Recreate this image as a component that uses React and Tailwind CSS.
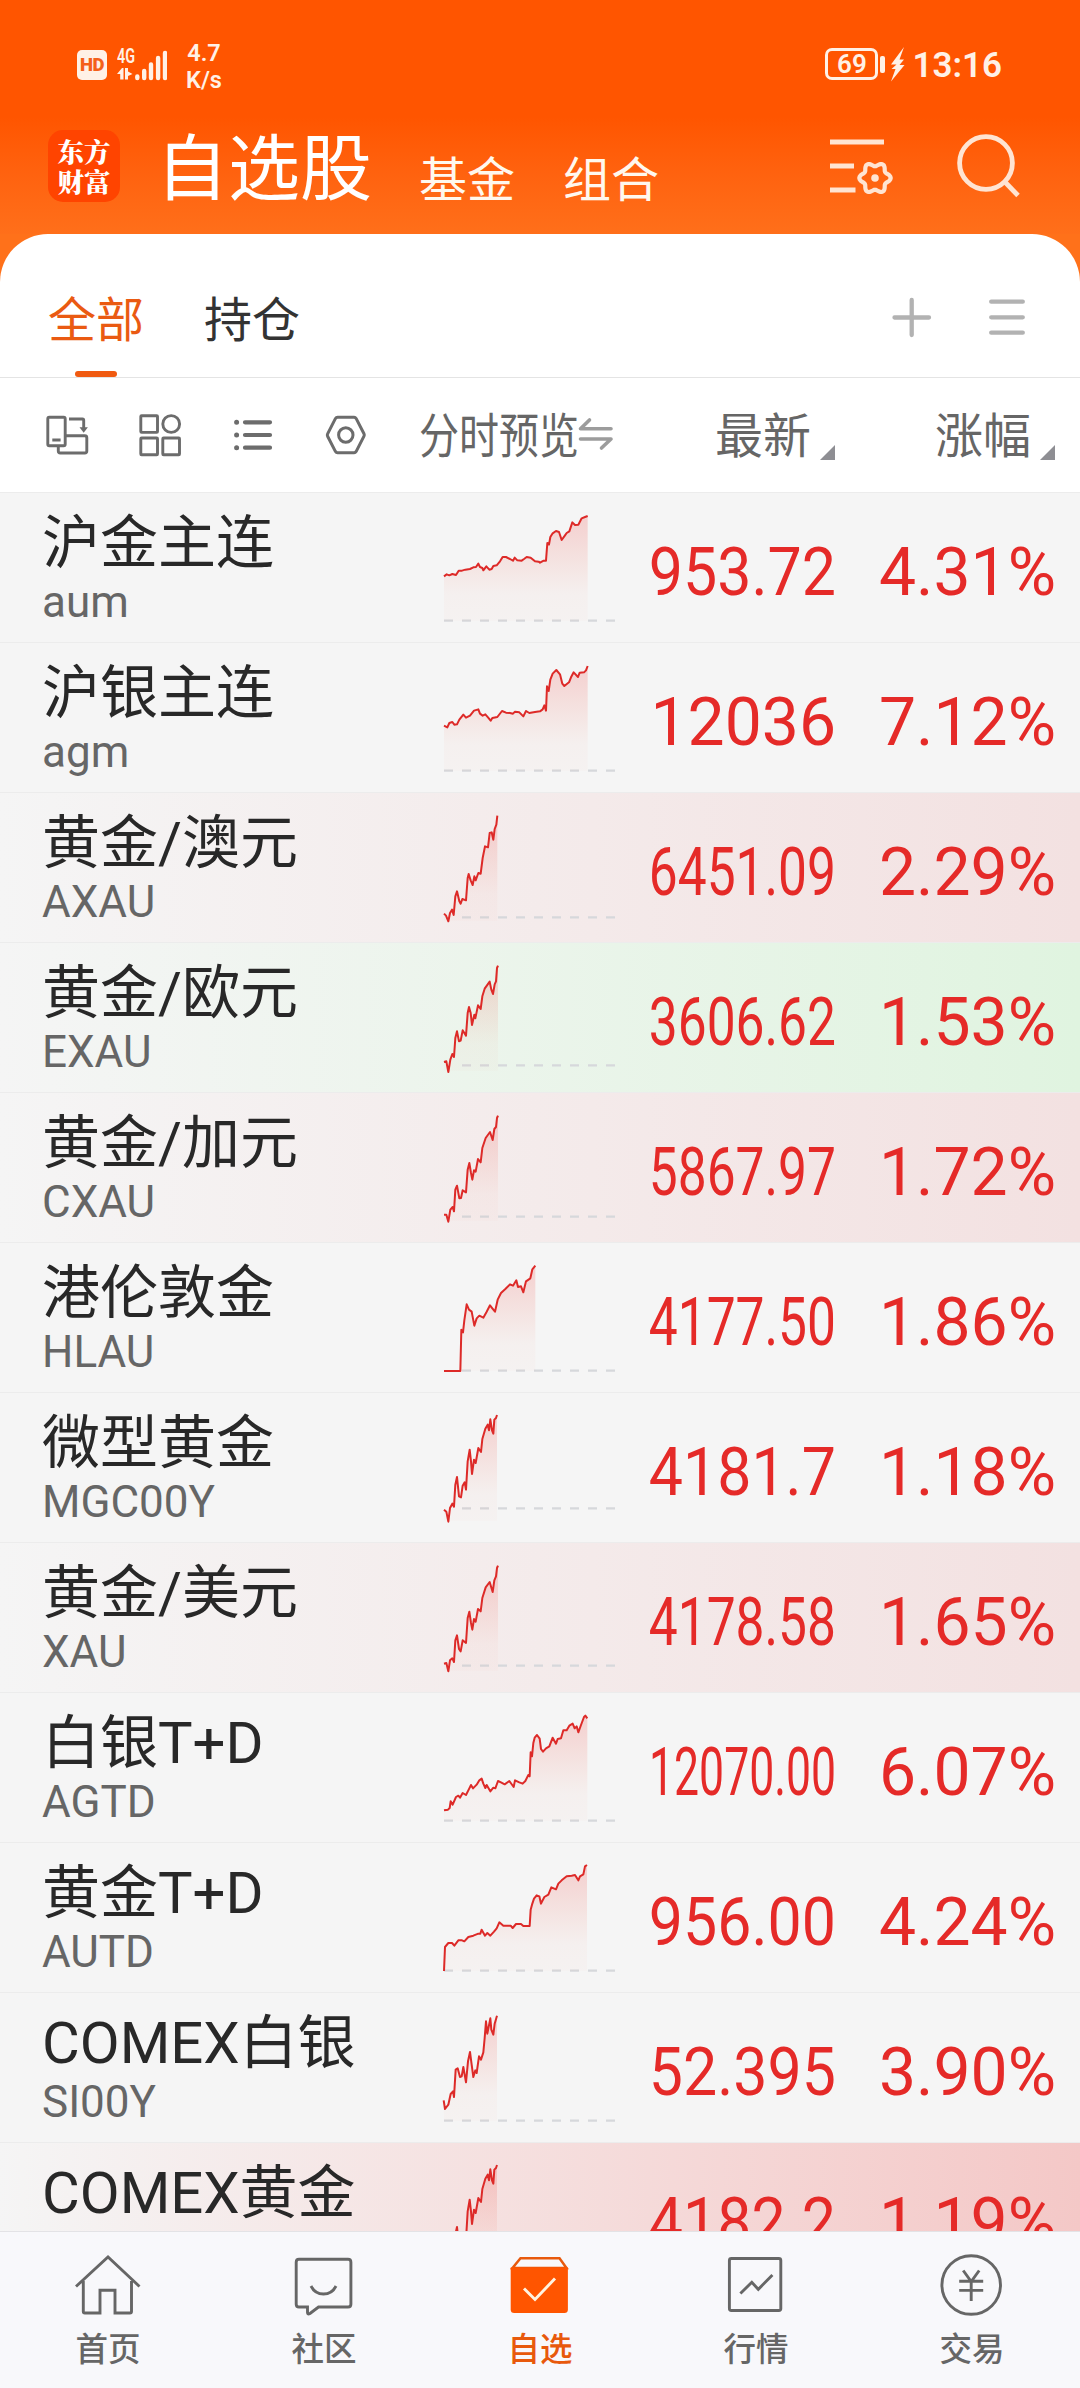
import React from "react";

const FONT = "font-['Roboto','Noto_Sans_CJK_SC',sans-serif]";

const MGC =
  "72,350 79,356 85,386 90,345 97,332 102,341 106,275 111,252 117,310 123,313 128,278 134,268 138,290 143,205 149,170 153,205 156,243 162,200 167,210 175,165 183,177 187,138 196,107 203,95 207,112 211,79 216,112 220,122 223,80 228,75 231,66";

const PLAIN = "bg-[#f5f5f5]";
const RED = "bg-linear-to-r from-[#f5f5f5] to-[#f3e1e1]";
const GREEN = "bg-linear-to-r from-[#f5f5f5] to-[#e0f4e0]";
const DEEP = "bg-linear-to-r from-[#f5f5f5] to-[#f4c8c7]";

// Spark-line points are in thirds of a pixel, measured from the top of the row.
const ROWS = [
  { name: "沪金主连", code: "aum", price: "953.72", pct: "4.31%", squeeze: "scale-x-[0.922]", tone: PLAIN, base: 383, dash: 72,
    pts: "72,250 80,244 88,247 97,243 108,246 116,233 126,233 136,230 150,228 160,223 168,222 175,212 180,222 187,225 190,232 199,220 208,230 215,228 220,219 230,217 240,205 248,192 258,192 270,198 279,203 284,194 292,202 305,203 312,198 320,192 332,194 345,205 356,206 360,209 371,203 378,203 382,150 387,155 391,132 398,121 408,114 417,117 425,141 435,127 440,120 448,115 457,88 465,96 475,95 485,76 495,72 503,69" },
  { name: "沪银主连", code: "agm", price: "12036", pct: "7.12%", squeeze: "", tone: PLAIN, base: 383, dash: 72,
    pts: "72,248 82,253 88,240 97,237 103,245 111,244 118,230 130,215 138,224 150,218 162,203 175,199 180,212 188,218 196,214 204,223 212,233 217,225 232,222 246,204 258,209 270,210 279,212 285,206 298,208 310,220 318,204 328,210 345,207 360,205 368,199 373,187 378,203 381,130 386,144 391,110 398,92 409,81 420,94 427,122 433,129 447,118 453,103 461,88 474,102 479,89 492,88 498,82 503,69" },
  { name: "黄金/澳元", code: "AXAU", price: "6451.09", pct: "2.29%", squeeze: "scale-x-[0.78]", tone: RED, base: 373, dash: 126,
    pts: "72,362 78,368 85,385 90,360 96,350 101,366 106,310 111,295 118,325 122,332 127,318 138,322 143,255 146,243 152,262 158,276 163,250 167,262 175,240 182,242 188,195 195,160 204,163 209,120 215,118 220,140 224,108 229,95 232,68" },
  { name: "黄金/欧元", code: "EXAU", price: "3606.62", pct: "1.53%", squeeze: "scale-x-[0.78]", tone: GREEN, base: 367, dash: 126,
    pts: "72,357 79,355 85,387 91,350 97,333 102,342 106,285 111,265 117,295 122,293 128,262 138,278 143,210 147,192 152,210 156,246 163,215 166,226 174,187 182,198 187,160 194,137 201,127 209,116 214,140 219,153 224,124 228,115 231,75 234,68" },
  { name: "黄金/加元", code: "CXAU", price: "5867.97", pct: "1.72%", squeeze: "scale-x-[0.78]", tone: RED, base: 371, dash: 126,
    pts: "72,365 79,365 85,386 91,350 98,342 102,355 106,290 111,278 118,316 123,315 128,292 138,298 143,230 148,210 153,240 157,260 162,232 167,236 174,198 182,208 187,165 197,135 210,117 218,141 223,108 228,102 231,75 234,68" },
  { name: "港伦敦金", code: "HLAU", price: "4177.50", pct: "1.86%", squeeze: "scale-x-[0.78]", tone: PLAIN, base: 383, dash: 126,
    pts: "72,384 121,384 124,260 129,268 133,232 140,184 147,200 155,206 163,248 170,226 178,218 190,224 200,206 210,187 217,196 225,206 233,170 243,150 256,138 270,124 279,128 289,112 294,132 303,130 310,148 318,115 331,106 337,79 346,68" },
  { name: "微型黄金", code: "MGC00Y", price: "4181.7", pct: "1.18%", squeeze: "scale-x-[0.922]", tone: PLAIN, base: 346, dash: 126, pts: MGC },
  { name: "黄金/美元", code: "XAU", price: "4178.58", pct: "1.65%", squeeze: "scale-x-[0.78]", tone: RED, base: 368, dash: 126,
    pts: "72,362 79,360 85,385 90,352 97,346 102,357 106,292 111,277 117,318 122,325 128,292 138,300 143,225 148,206 153,240 157,260 162,228 167,236 174,198 182,205 187,165 197,133 209,117 218,147 223,112 228,100 231,75 234,68" },
  { name: "白银T+D", code: "AGTD", price: "12070.00", pct: "6.07%", squeeze: "scale-x-[0.675]", tone: PLAIN, base: 383, dash: 72,
    pts: "72,352 84,350 89,345 92,325 98,335 108,312 115,308 120,314 128,300 138,306 148,286 153,276 159,286 170,275 178,262 185,257 190,272 196,285 200,276 211,295 220,284 226,286 234,264 243,268 254,274 268,264 281,282 285,262 298,268 308,272 316,264 325,246 329,250 332,178 336,190 340,150 344,134 351,126 359,137 363,168 369,176 378,166 388,160 398,134 408,152 413,138 423,136 430,112 440,112 448,98 458,92 464,106 470,100 475,118 483,96 492,72 496,68 502,76" },
  { name: "黄金T+D", code: "AUTD", price: "956.00", pct: "4.24%", squeeze: "scale-x-[0.922]", tone: PLAIN, base: 383, dash: 72,
    pts: "72,384 75,312 85,300 96,300 103,308 115,292 126,292 133,295 145,282 160,278 175,272 181,272 185,260 195,278 202,270 211,278 222,266 230,256 238,238 250,248 272,248 278,255 288,243 303,243 310,249 329,249 332,200 336,185 342,167 350,157 358,160 363,182 373,162 385,155 394,133 408,139 415,122 425,112 440,100 455,98 465,96 475,112 480,100 490,94 495,70 501,66" },
  { name: "COMEX白银", code: "SI00Y", price: "52.395", pct: "3.90%", squeeze: "scale-x-[0.922]", tone: PLAIN, base: 383, dash: 72,
    pts: "71,322 75,348 85,335 92,303 99,295 102,312 107,230 113,226 120,252 125,250 130,222 138,268 144,205 150,177 155,215 160,252 166,232 170,240 177,190 183,200 190,178 194,135 198,85 202,122 211,76 214,110 220,125 224,92 231,68" },
  { name: "COMEX黄金", price: "4182.2", pct: "1.19%", squeeze: "scale-x-[0.922]", tone: DEEP, base: 346, dash: 126, pts: MGC },
];

function Spark({ pts, base, dash, id }) {
  const list = pts.split(" ");
  const last = list[list.length - 1].split(",")[0];
  return (
    <svg className="h-[150px] w-[180px]" viewBox="60 0 540 450" fill="none">
      <defs>
        <linearGradient id={id} gradientUnits="userSpaceOnUse" x1="0" x2="0" y1="68" y2="383">
          <stop offset="0" stopColor="#f02828" stopOpacity="0.19" />
          <stop offset="0.75" stopColor="#f04a28" stopOpacity="0.03" />
          <stop offset="1" stopColor="#f04a28" stopOpacity="0.02" />
        </linearGradient>
      </defs>
      <path d={`M${dash} ${base}H585`} stroke="#d6d8db" strokeWidth="6.5" strokeDasharray="27 27" />
      <polygon points={`72,383 ${pts} ${last},383`} fill={`url(#${id})`} />
      <polyline points={pts} stroke="#dd2a28" strokeWidth="6" strokeLinejoin="round" />
    </svg>
  );
}

function Row({ row, index }) {
  return (
    <div className={`flex h-[150px] shrink-0 border-t border-[#ececec] pl-[42px] ${row.tone}`}>
      <div className="w-[398px] pt-[20px]">
        <div className="text-[58px] leading-[60px] whitespace-nowrap text-[#282828]">{row.name}</div>
        {row.code && <div className="mt-[4px] text-[44px] leading-[50px] text-[#666]">{row.code}</div>}
      </div>
      <Spark pts={row.pts} base={row.base} dash={row.dash} id={`fade-${index}`} />
      <div className="flex w-[216px] justify-end pt-[47px] text-[66px] leading-[66px] text-[#e52a28]">
        <span className={`origin-right ${row.squeeze}`}>{row.price}</span>
      </div>
      <div className="flex w-[220px] justify-end pt-[47px] text-[66px] leading-[66px] text-[#e52a28]">{row.pct}</div>
    </div>
  );
}

function StatusBar() {
  return (
    <div className="flex h-[118px] items-start pt-[40px] pr-[78px] pl-[77px] text-[#fff1e6]">
      <div className="mt-[10px] flex h-[30px] w-[30px] items-center justify-center rounded-[5px] bg-[#fff1e6] text-[18.5px] leading-none font-black tracking-[-0.5px] text-[#f4601a]">HD</div>
      <div className="mt-[7px] ml-[10px] flex h-[34px] w-[50px] items-end">
        <div className="flex h-full w-[18px] flex-col">
          <span className="origin-left scale-x-[0.72] text-[20px] leading-[19px] font-semibold">4G</span>
          <svg className="mt-[2px] h-[12px] w-[16px]" viewBox="0 0 16 12" fill="currentColor">
            <path d="M0 6 5 0h1.500v11.500H3.200V6zM8 0h3v3.500L15.500 6 11 8v3.500H8z" />
          </svg>
        </div>
        <svg className="h-[32px] w-[32px]" viewBox="0 0 32 32" stroke="currentColor" strokeWidth="4.400" strokeLinecap="round">
          <path d="M2.300 27.500v1.500M9.200 22v7M16 15.500V29M23.100 9v20M30 4v25" />
        </svg>
      </div>
      <div className="ml-[17px] w-[40px] text-center text-[23.500px] leading-[27px] font-semibold">4.7<br />K/s</div>
      <div className="flex-1" />
      <div className="mt-[8px] flex h-[32px] w-[53px] items-center justify-center rounded-[7px] border-[3px] border-[#fff1e6] text-[26px] leading-none font-semibold">69</div>
      <div className="mt-[16px] ml-[2px] h-[17px] w-[5px] rounded-[2px] bg-[#fff1e6]" />
      <svg className="mt-[7px] ml-[5px] h-[35px] w-[15px]" viewBox="0 0 15 35" fill="currentColor">
        <path d="M14 0 1 17.500h5.500L1.500 22h4L1 34.500 14.500 18H9.500l4.500-5.500H9.500z" />
      </svg>
      <div className="mt-[8px] ml-[7px] text-[35px] leading-[36px] font-semibold">13:16</div>
    </div>
  );
}

// Outline of a six-toothed gear with rounded teeth.
function gearPath(cx, cy) {
  const out = [];
  for (let a = 0; a < 360; a += 5) {
    const t = (a * Math.PI) / 180;
    const r = 13.7 + 2 * Math.cos(6 * t);
    out.push(`${(cx + r * Math.cos(t)).toFixed(2)} ${(cy + r * Math.sin(t)).toFixed(2)}`);
  }
  return `M${out.join("L")}Z`;
}

const GEAR = gearPath(49, 48);

function TitleBar() {
  return (
    <div className="flex h-[116px] items-start pl-[48px] text-white">
      <div className="mt-[12px] flex h-[72px] w-[72px] items-center justify-center rounded-[15px] bg-[#ff4400] text-center font-['Noto_Serif_CJK_SC','Noto_Sans_CJK_SC',sans-serif] text-[26.500px] leading-[30px] font-black">
        东方<br />财富
      </div>
      <div className="mt-[16px] ml-[36px] text-[72px] leading-[72px]">自选股</div>
      <div className="mt-[39px] ml-[47px] text-[48px] leading-[48px] text-[#fff8ee]">基金</div>
      <div className="mt-[39px] ml-[48px] text-[48px] leading-[48px] text-[#fff8ee]">组合</div>
      <svg className="mt-[12px] ml-[167px] h-[72px] w-[72px]" viewBox="0 0 72 72" fill="none" stroke="#ffe4d2" strokeWidth="4.800">
        <path d="M4 12h54M4 36h24M4 60h25.500" />
        <path d={GEAR} strokeWidth="4.200" strokeLinejoin="round" />
        <circle cx="49" cy="48" r="3.800" fill="#ffe4d2" stroke="none" />
      </svg>
      <svg className="mt-[12px] ml-[50px] h-[72px] w-[72px]" viewBox="0 0 72 72" fill="none" stroke="#ffe4d2" strokeWidth="4.800">
        <circle cx="38" cy="33" r="26.400" />
        <path d="M56.500 51.500 70 65.500" />
      </svg>
    </div>
  );
}

function Tabs() {
  return (
    <div className="flex h-[144px] items-start border-b border-[#e4e4e4] pl-[48px] text-[48px] leading-[48px]">
      <div className="flex h-[143px] flex-col items-center text-[#ea5a12]">
        <div className="mt-[63px]">全部</div>
        <div className="mt-[26px] h-[6px] w-[42px] rounded-full bg-[#f05a10]" />
      </div>
      <div className="mt-[63px] ml-[60px] text-[#333]">持仓</div>
      <svg className="mt-[60px] ml-[588px] h-[48px] w-[48px]" viewBox="0 0 48 48" stroke="#b2b2b2" strokeWidth="4.300" strokeLinecap="round">
        <path d="M6.500 23.500h34.500M23.700 6v35" />
      </svg>
      <svg className="mt-[60px] ml-[47px] h-[48px] w-[48px]" viewBox="0 0 48 48" stroke="#b2b2b2" strokeWidth="4.300" strokeLinecap="round">
        <path d="M8.200 7.700h31.600M8.200 23.300h31.600M8.200 38.700h31.600" />
      </svg>
    </div>
  );
}

function Corner() {
  return (
    <svg className="h-[15px] w-[15px]" viewBox="0 0 15 15">
      <path d="M15 0v15H0z" fill="#8e8e93" />
    </svg>
  );
}

function Columns() {
  return (
    <div className="flex h-[114px] items-start pl-[43px] text-[48px] leading-[48px] text-[#666]">
      <svg className="mt-[33px] h-[48px] w-[48px]" viewBox="0 0 48 48" fill="none" stroke="#6c6c6c" strokeWidth="2.900">
        <rect x="4.800" y="6.300" width="17.400" height="28.500" rx="1.500" />
        <path d="M9.300 29h8.300M26 8h13.500q1.200 0 1.200 1.200V17M15.300 35v5q0 2 2 2h24.500q2 0 2-2V26.800q0-2-2-2H22.500" />
        <path d="M36.500 16.300h8.400l-4.200 5.500z" fill="#6c6c6c" stroke="none" />
      </svg>
      <svg className="mt-[33px] ml-[45px] h-[48px] w-[48px]" viewBox="0 0 48 48" fill="none" stroke="#6c6c6c" strokeWidth="2.900">
        <rect x="4.800" y="4.700" width="16.700" height="16.700" rx="0.800" />
        <circle cx="35.200" cy="13" r="8.400" />
        <rect x="4.800" y="27" width="16.700" height="16.700" rx="0.800" />
        <rect x="26.800" y="27" width="16.700" height="16.700" rx="0.800" />
      </svg>
      <svg className="mt-[33px] ml-[45px] h-[48px] w-[48px]" viewBox="0 0 48 48" fill="none" stroke="#6c6c6c" strokeWidth="4.200" strokeLinecap="round">
        <path d="M16 11.300h25M16 24h25M16 36.700h25" />
        <path d="M7.600 11.300h.01M7.600 24h.01M7.600 36.700h.01" strokeWidth="5" />
      </svg>
      <svg className="mt-[33px] ml-[45px] h-[48px] w-[48px]" viewBox="0 0 48 48" fill="none" stroke="#6c6c6c" strokeWidth="3" strokeLinejoin="round">
        <path d="M15.500 6.200h16.600q1.300 0 2 1.200L42 22.800q.600 1.200 0 2.400l-7.900 15.400q-.7 1.200-2 1.200H15.500q-1.300 0-2-1.200L5.600 25.200q-.6-1.200 0-2.400L13.500 7.400q.7-1.200 2-1.200z" />
        <circle cx="23.800" cy="24" r="7.200" />
      </svg>
      <div className="mt-[35px] ml-[49px] w-[159px]">
        <div className="w-[192px] origin-left scale-x-[0.833] whitespace-nowrap">分时预览</div>
      </div>
      <svg className="mt-[38px] h-[36px] w-[36px]" viewBox="0 0 36 36" fill="none" stroke="#9c9c9c" strokeWidth="3.600" strokeLinecap="round" strokeLinejoin="round">
        <path d="M33 12.700H2.500L11.500 4M2.500 23H33l-9.500 9" />
      </svg>
      <div className="mt-[35px] ml-[101px]">最新</div>
      <div className="mt-[67px] ml-[9px]"><Corner /></div>
      <div className="mt-[35px] ml-[100px]">涨幅</div>
      <div className="mt-[67px] ml-[9px]"><Corner /></div>
    </div>
  );
}

const NAV = [
  { label: "首页", icon: <path d="M4 36.500 36 7l31.500 29.500M11.300 31v30.500q0 1.500 1.500 1.500H28V40.300h15V63h15q1.500 0 1.500-1.500V31" /> },
  { label: "社区", icon: (
    <>
      <path d="M11 9.300h49q2.900 0 2.900 2.900v42q0 2.800-2.900 2.800H30.500L22 63.500q-2.500 1.500-2.500-1V57H11q-2.800 0-2.800-2.800v-42q0-2.900 2.800-2.900z" />
      <path d="M23 36q4 8 12.500 8T48 36" />
    </>
  ) },
  { label: "自选", active: true, icon: (
    <>
      <path d="M16.500 8.200h39L62.500 18H8.500z" strokeWidth="2.500" />
      <path d="M6.700 17.500h57.200v42q0 3.500-3.500 3.500H10.200q-3.500 0-3.500-3.500z" fill="#ff5500" stroke="none" />
      <path d="m20 38.500 11 11 20-21" stroke="#fff3e0" />
    </>
  ) },
  { label: "行情", icon: (
    <>
      <rect x="9.400" y="8.500" width="51.400" height="52" rx="2" />
      <path d="m20.400 43.500 11.400-11.200 6.500 7L52.400 25" />
    </>
  ) },
  { label: "交易", icon: (
    <>
      <circle cx="35.200" cy="35" r="29.300" />
      <path d="m27.200 20.500 8 11 8-11M35.200 31.500V51M23.200 31.300h24M23.200 40.400h24" />
    </>
  ) },
];

function BottomNav() {
  return (
    <nav className="grid h-[157px] grid-cols-5 border-t border-[#e3e3e6] bg-[#f8f8fb]">
      {NAV.map((item) => (
        <div key={item.label} className={`flex flex-col items-center pt-[18px] ${item.active ? "text-[#e8590c]" : "text-[#666]"}`}>
          <svg className="h-[72px] w-[72px]" viewBox="0 0 72 72" fill="none" stroke="currentColor" strokeWidth="2.900">{item.icon}</svg>
          <span className="mt-[11px] text-[32.500px] leading-[34px] font-medium">{item.label}</span>
        </div>
      ))}
    </nav>
  );
}

export default function App() {
  return (
    <div className={`flex h-[2388px] w-[1080px] flex-col overflow-hidden bg-[#ff711a] ${FONT}`}>
      <header className="shrink-0 bg-linear-to-b from-[#ff5500] from-50% to-[#ff6f1a]">
        <StatusBar />
        <TitleBar />
      </header>
      <section className="shrink-0 rounded-t-[48px] bg-white">
        <Tabs />
        <Columns />
      </section>
      <main className="flex h-[1739px] shrink-0 flex-col overflow-hidden">
        {ROWS.map((row, i) => (
          <Row key={row.name} row={row} index={i} />
        ))}
      </main>
      <BottomNav />
    </div>
  );
}
